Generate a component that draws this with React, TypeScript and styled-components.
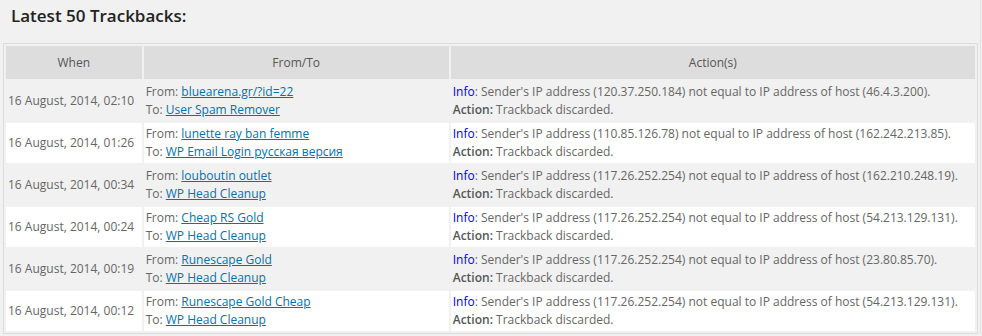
import styled, { createGlobalStyle } from "styled-components";

const GlobalStyle = createGlobalStyle`
  html, body {
    margin: 0;
    padding: 0;
    background: #f1f1f1;
    font-family: "Open Sans", "Liberation Sans", sans-serif;
    font-size: 12px;
    color: #555;
  }
`;

const Page = styled.div`
  width: 981px;
  box-sizing: border-box;
  border-right: 1px solid #e1e1e1;
  padding: 0 0 0 3px;
`;

const Title = styled.h2`
  margin: 0;
  padding: 4px 0 0 8px;
  height: 43px;
  box-sizing: border-box;
  font-size: 17px;
  font-weight: 600;
  color: #222;
`;

const Table = styled.table`
  width: 975px;
  border: 1px solid #dcdcdc;
  border-spacing: 2px;
  font-size: 12px;
`;

const HeadCell = styled.th<{ $width: number }>`
  width: ${({ $width }) => $width}px;
  height: 33px;
  padding: 0;
  background: #dddddd;
  font-weight: normal;
  color: #555;
  text-align: center;
`;

const Row = styled.tr<{ $odd: boolean }>`
  background: ${({ $odd }) => ($odd ? "#f1f1f1" : "#ffffff")};
`;

const Cell = styled.td`
  height: 40px;
  padding: 1px 2px;
  box-sizing: border-box;
  line-height: 18px;
  vertical-align: middle;
  color: #666;
`;

const Link = styled.a`
  color: #0073aa;
  text-decoration: underline;
`;

const Info = styled.span`
  color: #0000ee;
`;

const Strong = styled.strong`
  font-weight: 600;
  color: #555;
`;

const rows = [
  { when: "16 August, 2014, 02:10", from: "bluearena.gr/?id=22", to: "User Spam Remover", sender: "120.37.250.184", host: "46.4.3.200" },
  { when: "16 August, 2014, 01:26", from: "lunette ray ban femme", to: "WP Email Login русская версия", sender: "110.85.126.78", host: "162.242.213.85" },
  { when: "16 August, 2014, 00:34", from: "louboutin outlet", to: "WP Head Cleanup", sender: "117.26.252.254", host: "162.210.248.19" },
  { when: "16 August, 2014, 00:24", from: "Cheap RS Gold", to: "WP Head Cleanup", sender: "117.26.252.254", host: "54.213.129.131" },
  { when: "16 August, 2014, 00:19", from: "Runescape Gold", to: "WP Head Cleanup", sender: "117.26.252.254", host: "23.80.85.70" },
  { when: "16 August, 2014, 00:12", from: "Runescape Gold Cheap", to: "WP Head Cleanup", sender: "117.26.252.254", host: "54.213.129.131" },
];

export default function App() {
  return (
    <>
      <GlobalStyle />
      <Page>
        <Title>Latest 50 Trackbacks:</Title>
        <Table>
          <thead>
            <tr>
              <HeadCell $width={136}>When</HeadCell>
              <HeadCell $width={306}>From/To</HeadCell>
              <HeadCell $width={526}>Action(s)</HeadCell>
            </tr>
          </thead>
          <tbody>
            {rows.map((r, i) => (
              <Row key={i} $odd={i % 2 === 0}>
                <Cell>{r.when}</Cell>
                <Cell>
                  From: <Link href="#">{r.from}</Link>
                  <br />
                  To: <Link href="#">{r.to}</Link>
                </Cell>
                <Cell>
                  <Info>Info</Info>: Sender's IP address ({r.sender}) not equal to IP address of host ({r.host}).
                  <br />
                  <Strong>Action:</Strong> Trackback discarded.
                </Cell>
              </Row>
            ))}
          </tbody>
        </Table>
      </Page>
    </>
  );
}
